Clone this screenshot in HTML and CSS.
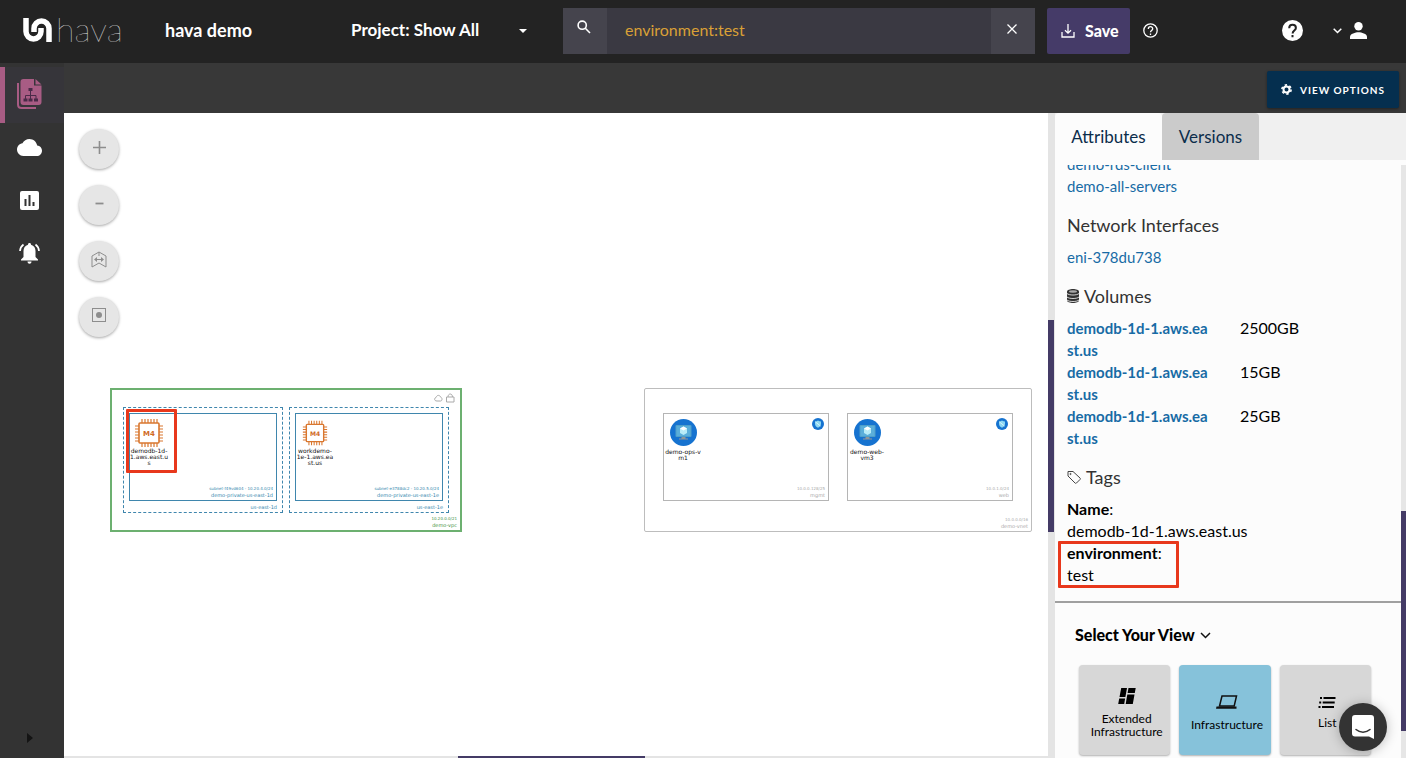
FILE: index.html
```html
<!DOCTYPE html>
<html lang="en">
<head>
    <meta charset="UTF-8">
    <meta name="viewport" content="width=device-width, initial-scale=1.0">
    <title>hava demo</title>
    <link rel="stylesheet" href="styles.css">
</head>
<body>
    <!-- shared shapes for the diagram -->
    <svg class="defs" width="0" height="0">
        <symbol id="chip" viewBox="0 0 30 30">
            <path d="M8 1v28M11 1v28M14 1v28M17 1v28M20 1v28M23 1v28M1 8h28M1 11h28M1 14h28M1 17h28M1 20h28M1 23h28" stroke="#d9772f" stroke-width="1.2"/>
            <rect x="5" y="5" width="20" height="20" rx="1" fill="#fff" stroke="#d9772f" stroke-width="1.6"/>
        </symbol>
        <symbol id="vm" viewBox="0 0 27 27">
            <circle cx="13.500" cy="13.500" r="13.500" fill="#1673d0"/>
            <rect x="5.500" y="6" width="16" height="12" rx="1" fill="#4f9fc9"/>
            <rect x="6.500" y="7" width="14" height="10" fill="#5aaeda"/>
            <path d="M13.500 7.500l3.500 2v4.500l-3.500 2-3.500-2v-4.500z" fill="#b8ecf8"/>
            <path d="M13.500 7.500l3.500 2-3.500 2-3.500-2z" fill="#fff"/>
            <path d="M11.500 18h4v1.500h2.500v1h-9v-1h2.500z" fill="#8f9698"/>
        </symbol>
        <symbol id="shield" viewBox="0 0 12 12">
            <circle cx="6" cy="6" r="6" fill="#1673d0"/>
            <path d="M6 2.500c1 .7 2 .9 3 .9v2.300c0 2-1.300 3.200-3 4-1.700-.8-3-2-3-4V3.400c1 0 2-.2 3-.9z" fill="#8ed8f2"/>
            <path d="M3.500 4l5 4" stroke="#d8f4fb" stroke-width="1"/>
        </symbol>
    </svg>

    <header>
        <a class="logo" href="#">
            <svg width="29" height="25" viewBox="0 0 29 25" fill="none" stroke="#fff" stroke-width="5.500">
                <path d="M3 0v13.500a7.500 7.500 0 0 0 15 0V10"/>
                <path d="M26 24V10.500a7.500 7.500 0 0 0-15 0V14"/>
            </svg>
            <span>hava</span>
        </a>
        <h1>hava demo</h1>
        <div class="project">
            <select aria-label="Project">
                <option>Project: Show All</option>
            </select>
            <svg width="8" height="4" viewBox="0 0 8 4"><path d="M0 0h8l-4 4z" fill="#fff"/></svg>
        </div>
        <form class="search">
            <button type="button" aria-label="Search">
                <svg width="14" height="14" viewBox="0 0 14 14" fill="none" stroke="#fff" stroke-width="1.600"><circle cx="5.200" cy="5.200" r="4.100"/><path d="M8.300 8.300l4.700 4.700"/></svg>
            </button>
            <input type="text" value="environment:test" aria-label="Search query">
            <button type="button" aria-label="Clear">
                <svg width="10" height="10" viewBox="0 0 10 10" stroke="#fff" stroke-width="1.300"><path d="M.5.5l9 9M9.500.5l-9 9"/></svg>
            </button>
        </form>
        <button class="save">
            <svg width="14" height="14" viewBox="0 0 14 14" fill="none" stroke="#fff" stroke-width="1.300"><path d="M1 8v5h12V8M7 0v9M4 6.200l3 3 3-3"/></svg>
            Save
        </button>
        <a class="search-help" href="#" aria-label="Search help">
            <svg width="15" height="15" viewBox="0 0 15 15" fill="none" stroke="#fff" stroke-width="1.300"><circle cx="7.500" cy="7.500" r="6.700"/><path d="M5.300 6c0-3 4.400-3 4.400-.2 0 1.700-2.200 1.700-2.200 3.400M7.500 10.500v1.400"/></svg>
        </a>
        <div class="account">
            <a href="#" aria-label="Help">
                <svg width="21" height="21" viewBox="0 0 21 21"><circle cx="10.500" cy="10.500" r="10.500" fill="#fff"/><path d="M7.200 8.200c0-4.700 6.700-4.400 6.700-.3 0 2.500-3.300 2.800-3.300 5.500M10.500 15v2.200" fill="none" stroke="#232323" stroke-width="2"/></svg>
            </a>
            <button aria-label="Account">
                <svg width="9" height="6" viewBox="0 0 9 6" fill="none" stroke="#fff" stroke-width="1.500"><path d="M.7.7l3.800 3.800L8.300.7"/></svg>
                <svg width="17" height="17" viewBox="0 0 17 17" fill="#fff"><circle cx="8.500" cy="4.200" r="4.200"/><path d="M0 17v-2.200c0-3 5.500-4.500 8.500-4.500s8.500 1.500 8.500 4.500V17z"/></svg>
            </button>
        </div>
    </header>

    <div class="layout">
        <nav class="sidebar">
            <a class="active" href="#" aria-label="Environments">
                <svg width="25" height="30" viewBox="0 0 25 30">
                    <path d="M1 4v21.500c0 2 1 3.500 3.500 3.500H19" fill="none" stroke="#a85c84" stroke-width="2"/>
                    <path d="M6.500 0H17v6.500h7.500V23c0 2-1 3-3 3h-15c-2 0-3-1-3-3V3c0-2 1-3 3-3z" fill="#a85c84"/>
                    <path d="M18.500 0l6 5.500h-6z" fill="#a85c84"/>
                    <path d="M11.500 9h4v3h-4zM6.500 19.500h4v3h-4zM11.500 19.500h4v3h-4zM17 19.500h4v3h-4z" fill="#4a2a48"/>
                    <path d="M13.500 12v8M8.500 20v-3.500H19V20" fill="none" stroke="#4a2a48"/>
                </svg>
            </a>
            <a href="#" aria-label="Sources">
                <svg width="25" height="17" viewBox="0 0 25 17" fill="#fff"><path d="M20.200 6.500C19.500 2.800 16.300 0 12.500 0 9.400 0 6.800 1.700 5.500 4.300 2.400 4.700 0 7.400 0 10.600 0 14.100 2.800 17 6.300 17h13.500c2.900 0 5.200-2.300 5.200-5.300 0-2.800-2.100-5-4.800-5.200z"/></svg>
            </a>
            <a class="reports" href="#" aria-label="Reports">
                <svg width="19" height="19" viewBox="0 0 19 19"><rect width="19" height="19" rx="2" fill="#fff"/><path d="M5.500 8v7M9.500 4v11M13.500 11v4" stroke="#333" stroke-width="2"/></svg>
            </a>
            <a class="alerts" href="#" aria-label="Alerts">
                <svg width="21" height="21" viewBox="0 0 21 21" fill="#fff"><path d="M10.500 0c1 0 1.500.7 1.500 1.700 3 .8 4.500 3.300 4.500 6.300v6l2.500 2.500v1H2v-1L4.500 14V8c0-3 1.500-5.500 4.500-6.300C9 .7 9.500 0 10.500 0zM8.500 18.500h4c0 3-4 3-4 0z"/><path d="M4.500 1.500C2.500 3 1.200 5 1 8M16.500 1.500c2 1.500 3.300 3.500 3.500 6.500" fill="none" stroke="#fff" stroke-width="1.700"/></svg>
            </a>
            <button class="expand" aria-label="Expand menu">
                <svg width="6" height="10" viewBox="0 0 6 10"><path d="M0 0l6 5-6 5z" fill="#141414"/></svg>
            </button>
        </nav>

        <main>
            <div class="toolbar">
                <button class="view-options">
                    <svg width="11" height="11" viewBox="0 0 11 11" fill="none" stroke="#fff"><circle cx="5.500" cy="5.500" r="3" stroke-width="2"/><circle cx="5.500" cy="5.500" r="4.600" stroke-width="1.600" stroke-dasharray="2.400 2.417"/></svg>
                    VIEW OPTIONS
                </button>
            </div>

            <div class="workspace">
                <section class="canvas-column">
                    <div class="canvas">
                        <div class="zoom-controls">
                            <button aria-label="Zoom in"><svg width="13" height="13" viewBox="0 0 13 13" stroke="#8d8d8d" stroke-width="1.600"><path d="M6.500 0v13M0 6.500h13"/></svg></button>
                            <button aria-label="Zoom out"><svg width="13" height="13" viewBox="0 0 13 13" stroke="#8d8d8d" stroke-width="1.800"><path d="M2.500 6.500h8"/></svg></button>
                            <button aria-label="Fit width"><svg width="16" height="17" viewBox="0 0 16 17" fill="none" stroke="#8d8d8d"><path d="M8 1l7 4v11l-7-4-7 4V5zM8 1v4M4 8.500h8" /><path d="M6 6L3 8.500 6 11zM10 6l3 2.500-3 2.500z" fill="#8d8d8d" stroke="none"/></svg></button>
                            <button aria-label="Centre"><svg width="14" height="14" viewBox="0 0 14 14"><rect x=".5" y=".5" width="13" height="13" fill="none" stroke="#8d8d8d"/><circle cx="7" cy="7" r="3" fill="#8d8d8d"/></svg></button>
                        </div>

                        <div class="network vpc">
                            <svg class="vpc-icons" width="21" height="10" viewBox="0 0 21 10" fill="none" stroke="#aaa"><path d="M3 8C-.5 8 .5 4.500 2 4.500 3 1.500 6 2 6.500 4c2 .5 2 4 0 4zM12.500 4h7.500v5h-7.500zM14 4c0-4 4.500-4 4.500 0"/></svg>
                            <div class="zone">
                                <div class="subnet">
                                    <div class="node"><svg width="30" height="30" viewBox="0 0 30 30"><use href="#chip"/><text x="15" y="18" text-anchor="middle">M4</text></svg>demodb-1d-<br>1.aws.east.u<br>s</div>
                                    <p><small>subnet-f49vd604 - 10.20.4.0/24</small>demo-private-us-east-1d</p>
                                </div>
                                <p>us-east-1d</p>
                            </div>
                            <div class="zone">
                                <div class="subnet">
                                    <div class="node plain"><svg width="26" height="26" viewBox="0 0 30 30"><use href="#chip"/><text x="15" y="18" text-anchor="middle">M4</text></svg>workdemo-<br>1e-1.aws.ea<br>st.us</div>
                                    <p><small>subnet-e3788dc2 - 10.20.5.0/24</small>demo-private-us-east-1e</p>
                                </div>
                                <p>us-east-1e</p>
                            </div>
                            <p class="network-name"><small>10.20.0.0/21</small>demo-vpc</p>
                            <div class="highlight node-highlight"></div>
                        </div>

                        <div class="network vnet">
                            <div class="subnet">
                                <div class="node"><svg width="27" height="27"><use href="#vm"/></svg>demo-ops-v<br>m1</div>
                                <svg class="badge" width="12" height="12"><use href="#shield"/></svg>
                                <p><small>10.0.0.128/25</small>mgmt</p>
                            </div>
                            <div class="subnet">
                                <div class="node"><svg width="27" height="27"><use href="#vm"/></svg>demo-web-<br>vm3</div>
                                <svg class="badge" width="12" height="12"><use href="#shield"/></svg>
                                <p><small>10.0.1.0/24</small>web</p>
                            </div>
                            <p class="network-name"><small>10.0.0.0/16</small>demo-vnet</p>
                        </div>
                    </div>
                    <div class="scroll-x"><span></span></div>
                </section>
                <div class="scroll-y"><span></span></div>

                <aside>
                    <div class="tabs">
                        <button class="selected">Attributes</button>
                        <button>Versions</button>
                    </div>
                    <div class="panel">
                        <div class="panel-main">
                            <div class="attributes">
                                <a href="#">demo-rds-client</a>
                                <a href="#">demo-all-servers</a>
                                <h2>Network Interfaces</h2>
                                <a href="#">eni-378du738</a>
                                <h2>
                                    <svg width="12" height="14" viewBox="0 0 12 14" fill="#333"><path d="M0 2.500C0 1 3 0 6 0s6 1 6 2.500v9C12 13 9 14 6 14s-6-1-6-2.500z"/><path d="M0 4.500c2 2 10 2 12 0M0 8c2 2 10 2 12 0M0 11c2 2 10 2 12 0" fill="none" stroke="#fcfcfc" stroke-width=".8"/><ellipse cx="6" cy="2.500" rx="4" ry="1.200" fill="#aaa"/></svg>
                                    Volumes
                                </h2>
                                <table>
                                    <tr><th scope="row"><a href="#">demodb-1d-1.aws.east.us</a></th><td>2500GB</td></tr>
                                    <tr><th scope="row"><a href="#">demodb-1d-1.aws.east.us</a></th><td>15GB</td></tr>
                                    <tr><th scope="row"><a href="#">demodb-1d-1.aws.east.us</a></th><td>25GB</td></tr>
                                </table>
                                <h2>
                                    <svg width="14" height="14" viewBox="0 0 14 14" fill="none" stroke="#444"><path d="M1 1.500h5l7 6.500c.5.500.5 1 0 1.500l-3.500 3.500c-.5.500-1 .5-1.500 0L1 6z"/><circle cx="3.500" cy="4" r=".6"/></svg>
                                    Tags
                                </h2>
                                <dl>
                                    <div><dt>Name</dt><dd>demodb-1d-1.aws.east.us</dd></div>
                                    <div class="matched"><dt>environment</dt><dd>test</dd><span class="highlight"></span></div>
                                </dl>
                            </div>
                            <div class="views">
                                <button class="views-title">Select Your View <svg width="11" height="7" viewBox="0 0 11 7" fill="none" stroke="#111" stroke-width="1.500"><path d="M1 1l4.500 4.500L10 1"/></svg></button>
                                <div class="cards">
                                    <button>
                                        <svg width="20" height="16" viewBox="0 0 20 16" fill="#000"><path d="M4.200 0H10L8.400 9H2.500zM2.200 10.500h5.900L7.200 16H1.200zM11.500 0h7.200l-.9 5h-7.200zM10.300 6.500h7.200L15.800 16H8.700z"/></svg>
                                        Extended<br>Infrastructure
                                    </button>
                                    <button class="selected">
                                        <svg width="22" height="15" viewBox="0 0 22 15"><path d="M6 1h14.500l-2.300 10H3.500z" fill="none" stroke="#111" stroke-width="1.500"/><path d="M.5 11.500h20v2.300H0z" fill="#111"/></svg>
                                        Infrastructure
                                    </button>
                                    <button>
                                        <svg width="18" height="11" viewBox="0 0 18 11" stroke="#000" stroke-width="2"><path d="M2 1h2M5.500 1h12M1.200 5.500h2M4.700 5.500h12M.5 10h2M4 10h12"/></svg>
                                        List
                                    </button>
                                </div>
                            </div>
                        </div>
                        <div class="panel-scroll"><span></span></div>
                    </div>
                </aside>
            </div>
        </main>
    </div>

    <button class="chat" aria-label="Open chat">
        <svg width="22" height="24" viewBox="0 0 22 24"><path d="M3 0h16c2 0 3 1 3 3v21l-5-2.500H3c-2 0-3-1-3-3V3c0-2 1-3 3-3z" fill="#fff"/><path d="M4 14.500c4 3.500 10 3.500 14 0" fill="none" stroke="#333" stroke-width="1.500" stroke-linecap="round"/></svg>
    </button>
</body>
</html>
```

FILE: styles.css
```css
* {
    box-sizing: border-box;
}
body {
    margin: 0;
    height: 100vh;
    display: flex;
    flex-direction: column;
    overflow: hidden;
    font-family: Lato, sans-serif;
    font-size: 16px;
    color: #000;
    background-color: white;
}
h1, h2, p, dl, dd {
    margin: 0;
}
button {
    border: none;
    padding: 0;
    font-family: inherit;
    color: inherit;
    background: none;
    cursor: pointer;
}
a {
    text-decoration: none;
}
.defs {
    position: absolute;
}
.highlight {
    position: absolute;
    border: 3px solid #e8381c;
    border-radius: 1px;
}

/* header */
header {
    display: flex;
    align-items: center;
    flex: none;
    height: 63px;
    padding-bottom: 2px;
    background-color: #232323;
    color: white;
}
.logo {
    display: flex;
    align-items: center;
    gap: 4px;
    width: 142px;
    margin-left: 23px;
    color: white;
    font-size: 34px;
    font-weight: 100;
    line-height: 30px;
}
.logo span {
    padding-bottom: 4px;
}
h1 {
    width: 186px;
    padding-bottom: 2px;
    font-size: 18px;
    font-weight: 700;
}
.project {
    display: flex;
    align-items: center;
    width: 212px;
}
.project select {
    appearance: none;
    width: 168px;
    padding: 0 0 2px;
    border: none;
    background: none;
    color: white;
    font-family: inherit;
    font-size: 17px;
    font-weight: 700;
}
.search {
    display: flex;
    flex: 1;
    height: 46px;
    background-color: #3a3942;
}
.search button {
    width: 44px;
    padding: 0 3px 4px 0;
    background-color: #45444d;
}
.search input {
    flex: 1;
    min-width: 0;
    padding: 0 18px 2px;
    border: none;
    background: none;
    color: #d9a036;
    font-family: inherit;
    font-size: 16px;
}
.save {
    display: flex;
    align-items: center;
    gap: 10px;
    width: 83px;
    height: 46px;
    margin: 0 13px 0 12px;
    padding-left: 14px;
    border-radius: 2px;
    background-color: #453b68;
    font-size: 16px;
    font-weight: 900;
}
.search-help {
    display: flex;
}
.account {
    display: flex;
    align-items: center;
    gap: 30px;
    margin: 0 39px 0 124px;
}
.account a {
    display: flex;
}
.account button {
    display: flex;
    align-items: center;
    gap: 8px;
}

/* sidebar */
.layout {
    display: flex;
    flex: 1;
    min-height: 0;
}
.sidebar {
    display: flex;
    flex-direction: column;
    width: 64px;
    padding-top: 4px;
    background-color: #333333;
}
.sidebar a {
    display: flex;
    align-items: center;
    height: 53px;
    padding: 0 0 4px 17px;
}
.sidebar a.active {
    height: 56px;
    padding: 0 0 2px 12px;
    border-left: 5px solid #a85c84;
    background-color: #36353a;
}
.sidebar a.reports {
    padding-left: 20px;
}
.sidebar a.alerts {
    padding-left: 19px;
}
.expand {
    width: 60px;
    height: 40px;
    margin-top: auto;
}

main {
    display: flex;
    flex-direction: column;
    flex: 1;
    min-width: 0;
}
.toolbar {
    display: flex;
    justify-content: flex-end;
    align-items: center;
    flex: none;
    height: 50px;
    padding: 3px 7px 0 0;
    background-color: #383838;
}
.view-options {
    display: flex;
    align-items: center;
    justify-content: center;
    gap: 8px;
    width: 132px;
    height: 37px;
    border-radius: 2px;
    background-color: #052f4f;
    box-shadow: 0 1px 3px rgba(0, 0, 0, 0.4);
    color: white;
    font-size: 10px;
    font-weight: 700;
    letter-spacing: 1px;
}
.workspace {
    display: flex;
    flex: 1;
    min-height: 0;
}

/* canvas */
.canvas-column {
    display: flex;
    flex-direction: column;
    flex: 1;
    min-width: 0;
}
.canvas {
    position: relative;
    flex: 1;
    overflow: hidden;
}
.zoom-controls {
    display: flex;
    flex-direction: column;
    align-items: flex-start;
    gap: 16px;
    padding: 16px 15px;
}
.zoom-controls button {
    display: flex;
    align-items: center;
    justify-content: center;
    width: 40px;
    height: 40px;
    padding-bottom: 4px;
    border-radius: 50%;
    background-color: #e6e6e6;
    box-shadow: 0 1px 3px rgba(0, 0, 0, 0.35);
}
.scroll-x {
    flex: none;
    height: 2px;
    background-color: #e4e4e4;
}
.scroll-x span {
    display: block;
    width: 19%;
    height: 2px;
    margin-left: 40%;
    background-color: #443b66;
}
.scroll-y {
    width: 7px;
    padding-top: 207px;
    background-color: #e4e4e4;
}
.scroll-y span {
    display: block;
    width: 6px;
    height: 212px;
    background-color: #443b66;
}

/* diagram */
.network {
    position: absolute;
    top: 275px;
    display: flex;
    height: 144px;
    font-family: "DejaVu Sans", sans-serif;
    font-size: 5px;
    line-height: 7px;
}
.network p {
    text-align: right;
}
.network small {
    display: block;
    font-size: 4px;
}
.vpc {
    left: 46px;
    gap: 6px;
    width: 352px;
    padding: 17px 11px;
    border: 2px solid #6cb070;
    color: #3f9246;
}
.vpc-icons {
    position: absolute;
    top: 3px;
    right: 5px;
}
.zone {
    width: 160px;
    height: 106px;
    padding: 5px;
    border: 1px dashed #3f86ad;
    color: #3487ad;
}
.zone .subnet {
    width: 148px;
    height: 88px;
    border: 1px solid #3f86ad;
}
.zone > p {
    padding-top: 3px;
}
.subnet {
    position: relative;
    display: flex;
    flex-direction: column;
    align-items: flex-start;
    justify-content: space-between;
    padding: 4px 3px 1px 0;
}
.subnet p {
    align-self: flex-end;
}
.node {
    display: flex;
    flex-direction: column;
    align-items: center;
    width: 38px;
    color: #111;
    font-size: 6px;
    line-height: 6px;
    text-align: center;
}
.node.plain svg {
    margin: 2px 0;
}
.node text {
    fill: #cf6a25;
    font-size: 7px;
    font-weight: 700;
}
.network-name {
    position: absolute;
    right: 3px;
    bottom: 1px;
}
.node-highlight {
    top: 19px;
    left: 14px;
    width: 51px;
    height: 64px;
}
.vnet {
    left: 580px;
    gap: 18px;
    width: 388px;
    padding: 24px 18px;
    border: 1px solid #bdbdbd;
    border-radius: 2px;
    color: #aaa;
}
.vnet .subnet {
    width: 166px;
    height: 88px;
    padding-top: 5px;
    border: 1px solid #b5b5b5;
}
.vnet .node svg {
    margin-bottom: 3px;
}
.badge {
    position: absolute;
    top: 4px;
    right: 4px;
}

/* right panel */
aside {
    display: flex;
    flex-direction: column;
    width: 351px;
    background-color: #fcfcfc;
}
.tabs {
    display: flex;
    flex: none;
    height: 47px;
    background-color: #f0f0f0;
}
.tabs button {
    width: 97px;
    border-radius: 4px 4px 0 0;
    background-color: #cbcbcb;
    color: #0b2d4b;
    font-size: 17px;
}
.tabs button.selected {
    width: 107px;
    background-color: #fcfcfc;
}
.panel {
    display: flex;
    flex: 1;
    min-height: 0;
    padding-top: 5px;
}
.panel-main {
    display: flex;
    flex-direction: column;
    flex: 1;
    min-width: 0;
}
.panel-scroll {
    width: 5px;
    padding-top: 346px;
    background-color: #e6e6e6;
}
.panel-scroll span {
    display: block;
    height: 220px;
    background-color: #443b66;
}
.attributes {
    display: flex;
    flex-direction: column;
    justify-content: flex-end;
    flex: 1;
    min-height: 0;
    padding: 0 12px 15px;
    overflow: hidden;
    line-height: 22px;
}
.attributes > * {
    flex: none;
}
.attributes a {
    color: #176ba5;
    font-size: 15px;
}
.attributes h2 {
    display: flex;
    align-items: center;
    gap: 5px;
    margin: 17px 0 10px;
    color: #333;
    font-size: 18px;
    font-weight: 400;
}
table {
    border-collapse: collapse;
    table-layout: fixed;
    width: 100%;
}
th, td {
    padding: 0;
    vertical-align: top;
    text-align: left;
}
th {
    width: 173px;
    padding-right: 30px;
    word-break: break-all;
}
dl div {
    position: relative;
}
dt {
    font-weight: 700;
}
dt::after {
    content: ":";
    font-weight: 400;
}
.matched .highlight {
    top: -1px;
    bottom: -2px;
    left: -9px;
    width: 121px;
}
.views {
    flex: none;
    padding: 21px 20px 3px;
    border-top: 2px solid #a0a0a0;
}
.views-title {
    display: flex;
    align-items: center;
    gap: 5px;
    line-height: 22px;
    font-size: 16px;
    font-weight: 900;
}
.cards {
    display: flex;
    gap: 9px;
    margin-top: 19px;
    padding: 0 10px 0 4px;
}
.cards button {
    display: flex;
    flex-direction: column;
    align-items: center;
    justify-content: center;
    flex: 1;
    height: 90px;
    padding: 6px 0 0 4px;
    border-radius: 4px;
    background-color: #d7d7d7;
    box-shadow: 0 1px 2px rgba(0, 0, 0, 0.3);
    font-size: 12px;
    line-height: 13px;
}
.cards svg {
    margin-bottom: 8px;
}
.cards button.selected {
    background-color: #86c2da;
}
.chat {
    position: absolute;
    right: 19px;
    bottom: 7px;
    display: flex;
    align-items: center;
    justify-content: center;
    width: 48px;
    height: 48px;
    border-radius: 50%;
    background-color: #333;
    box-shadow: 0 1px 12px rgba(0, 0, 0, 0.25);
}
```
